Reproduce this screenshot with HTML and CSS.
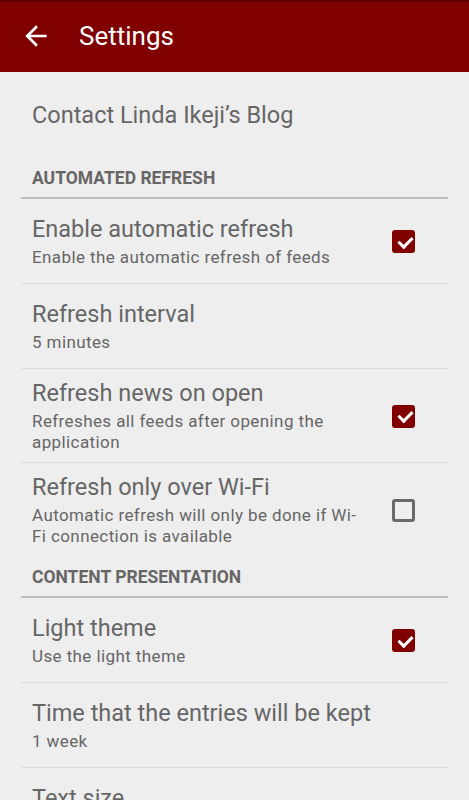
FILE: index.html
```html
<html>
<head>
  <title>Settings</title>
  <meta name="viewport" content="width=device-width">
  <link rel="stylesheet" href="styles.css">
</head>
<body>

<header class="toolbar">
  <svg class="back" viewBox="0 0 24 24" width="32" height="32"><path d="M20 11H7.83l5.59-5.59L12 4l-8 8 8 8 1.41-1.41L7.83 13H20v-2z" fill="#fff"/></svg>
  <span class="title">Settings</span>
</header>

<section class="prefs">
  <div class="pref">
    <div class="text">
      <div class="name">Contact Linda Ikeji’s Blog</div>
    </div>
  </div>

  <div class="category">AUTOMATED REFRESH</div>
  <div class="pref">
    <div class="text">
      <div class="name">Enable automatic refresh</div>
      <div class="summary">Enable the automatic refresh of feeds</div>
    </div>
    <span class="check on"></span>
  </div>
  <div class="pref">
    <div class="text">
      <div class="name">Refresh interval</div>
      <div class="summary">5 minutes</div>
    </div>
  </div>
  <div class="pref">
    <div class="text">
      <div class="name">Refresh news on open</div>
      <div class="summary">Refreshes all feeds after opening the application</div>
    </div>
    <span class="check on"></span>
  </div>
  <div class="pref last">
    <div class="text">
      <div class="name">Refresh only over Wi-Fi</div>
      <div class="summary">Automatic refresh will only be done if Wi-Fi connection is available</div>
    </div>
    <span class="check"></span>
  </div>

  <div class="category">CONTENT PRESENTATION</div>
  <div class="pref">
    <div class="text">
      <div class="name">Light theme</div>
      <div class="summary">Use the light theme</div>
    </div>
    <span class="check on"></span>
  </div>
  <div class="pref">
    <div class="text">
      <div class="name">Time that the entries will be kept</div>
      <div class="summary">1 week</div>
    </div>
  </div>
  <div class="pref">
    <div class="text">
      <div class="name">Text size</div>
      <div class="summary">Normal</div>
    </div>
  </div>
</section>

</body>
</html>
```

FILE: styles.css
```css
* { box-sizing: border-box; }
html, body { padding: 0; margin: 0; }
body { background-color: #eeeeee; font-family: Roboto, "Noto Sans", sans-serif; color: #666666; overflow: hidden; height: 800px; }

.toolbar { display: flex; align-items: center; height: 72px; padding-left: 20px; background: linear-gradient(#560000, #800000 3px); color: white; }
.toolbar .back { display: block; flex: none; }
.toolbar .title { margin-left: 27px; font-size: 26px; }

.prefs { margin: 0 21px; }
.pref { display: flex; align-items: center; min-height: 85px; padding: 10px 0 9px 11px; border-bottom: 1px solid #dcdcdc; }
.pref:first-child, .pref.last { border-bottom: none; }
.pref .text { flex: 1; min-width: 0; }
.pref .name { font-size: 23.5px; line-height: 28px; }
.pref .summary { margin-top: 4px; font-size: 17px; line-height: 21px; letter-spacing: 0.4px; padding-right: 20px; }

.category { padding: 11px 0 9px 11px; font-size: 17.5px; line-height: 20px; font-weight: bold; border-bottom: 2px solid #bdbdbd; }

.check { flex: none; width: 23px; height: 23px; margin: 0 33px 0 4px; border: 3px solid #6a6a6a; border-radius: 3px; position: relative; }
.check.on { background-color: #800000; border-color: #800000; }
.check.on::after { content: ""; position: absolute; left: 5.5px; top: 0.5px; width: 6px; height: 11px; border: solid white; border-width: 0 3px 3px 0; transform: rotate(45deg); }
```
